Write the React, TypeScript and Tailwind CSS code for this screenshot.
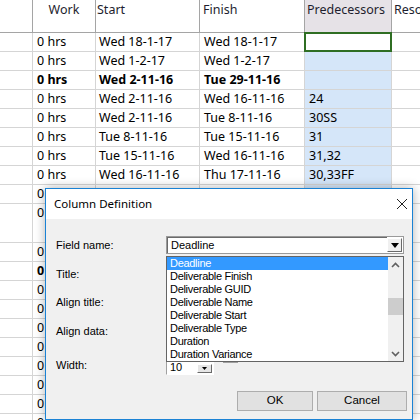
const grid = '"Noto Sans", "Liberation Sans", sans-serif';
const win = '"Liberation Sans", Arial, sans-serif';

type Row = { w: string; s: string; f: string; p: string; bold?: boolean; sel?: boolean; h: string };

const rows: Row[] = [
  { w: '0 hrs', s: 'Wed 18-1-17', f: 'Wed 18-1-17', p: '', sel: true, h: 'h-[19px]' },
  { w: '0 hrs', s: 'Wed 1-2-17', f: 'Wed 1-2-17', p: '', h: 'h-[19px]' },
  { w: '0 hrs', s: 'Wed 2-11-16', f: 'Tue 29-11-16', p: '', bold: true, h: 'h-[19px]' },
  { w: '0 hrs', s: 'Wed 2-11-16', f: 'Wed 16-11-16', p: '24', h: 'h-[19px]' },
  { w: '0 hrs', s: 'Wed 2-11-16', f: 'Tue 8-11-16', p: '30SS', h: 'h-[19px]' },
  { w: '0 hrs', s: 'Tue 8-11-16', f: 'Tue 15-11-16', p: '31', h: 'h-[19px]' },
  { w: '0 hrs', s: 'Tue 15-11-16', f: 'Wed 16-11-16', p: '31,32', h: 'h-[19px]' },
  { w: '0 hrs', s: 'Wed 16-11-16', f: 'Thu 17-11-16', p: '30,33FF', h: 'h-[19px]' },
  { w: '0 hrs', s: 'Thu 17-11-16', f: 'Thu 17-11-16', p: '34', h: 'h-[19px]' },
  { w: '0 hrs', s: 'Thu 17-11-16', f: 'Fri 18-11-16', p: '35', h: 'h-[39px]' },
  { w: '0 hrs', s: 'Fri 18-11-16', f: 'Fri 18-11-16', p: '36', h: 'h-[19px]' },
  { w: '0 hrs', s: 'Mon 21-11-16', f: 'Tue 29-11-16', p: '', bold: true, h: 'h-[19px]' },
  { w: '0 hrs', s: 'Mon 21-11-16', f: 'Tue 22-11-16', p: '37', h: 'h-[19px]' },
  { w: '0 hrs', s: 'Tue 22-11-16', f: 'Wed 23-11-16', p: '39', h: 'h-[19px]' },
  { w: '0 hrs', s: 'Wed 23-11-16', f: 'Thu 24-11-16', p: '40', h: 'h-[19px]' },
  { w: '0 hrs', s: 'Thu 24-11-16', f: 'Fri 25-11-16', p: '41', h: 'h-[19px]' },
  { w: '0 hrs', s: 'Fri 25-11-16', f: 'Mon 28-11-16', p: '42', h: 'h-[19px]' },
  { w: '0 hrs', s: 'Mon 28-11-16', f: 'Tue 29-11-16', p: '43', h: 'h-[19px]' },
  { w: '0 hrs', s: 'Tue 29-11-16', f: 'Tue 29-11-16', p: '44', h: 'h-[19px]' },
  { w: '0 hrs', s: 'Tue 29-11-16', f: 'Tue 29-11-16', p: '45', h: 'h-[19px]' },
];

const fields = [
  'Deadline',
  'Deliverable Finish',
  'Deliverable GUID',
  'Deliverable Name',
  'Deliverable Start',
  'Deliverable Type',
  'Duration',
  'Duration Variance',
];

function Chevron({ up }: { up?: boolean }) {
  return (
    <svg width="9" height="6" viewBox="0 0 9 6" className={up ? '' : 'rotate-180'}>
      <path d="M1 5 L4.5 1.5 L8 5" fill="none" stroke="#606060" strokeWidth="1.6" />
    </svg>
  );
}

function Grid() {
  return (
    <div className="text-[12.5px] text-black" style={{ fontFamily: grid }}>
      <div className="flex h-[33px] border-b border-[#a5a5a5] text-[#1e1e2e]">
        <div className="w-[33px] shrink-0 border-r border-[#a5a5a5]" />
        <div className="w-[63px] shrink-0 border-r border-[#a5a5a5] pt-[1px] text-center">Work</div>
        <div className="w-[104px] shrink-0 border-r border-[#a5a5a5] pt-[1px] pl-[1px]">Start</div>
        <div className="w-[105px] shrink-0 border-r border-[#a5a5a5] pt-[1px] pl-[3px]">Finish</div>
        <div className="w-[87px] shrink-0 border-r border-[#a5a5a5] bg-[#e6e2e7] pt-[1px] pl-[2px]">Predecessors</div>
        <div className="flex-1 pt-[1px] pl-[2px] whitespace-nowrap overflow-hidden">Resource Names</div>
      </div>
      {rows.map((r, i) => (
        <div key={i} className={`flex border-b border-[#d5d5d5] ${r.h} ${r.bold ? 'font-bold' : ''}`}>
          <div className="w-[33px] shrink-0 border-r border-[#d5d5d5]" />
          <div className="w-[63px] shrink-0 border-r border-[#d5d5d5] pl-[4px] leading-[18px] whitespace-nowrap overflow-hidden">{r.w}</div>
          <div className="w-[104px] shrink-0 border-r border-[#d5d5d5] pl-[3px] leading-[18px] whitespace-nowrap overflow-hidden">{r.s}</div>
          <div className="w-[105px] shrink-0 border-r border-[#d5d5d5] pl-[4px] leading-[18px] whitespace-nowrap overflow-hidden">{r.f}</div>
          <div
            className={`relative w-[87px] shrink-0 border-r border-[#d5d5d5] pl-[4px] leading-[18px] whitespace-nowrap ${
              r.sel ? 'bg-white' : 'bg-[#d5e6f9]'
            }`}
          >
            {r.p}
            {r.sel && <span className="absolute -left-px -top-px -right-px -bottom-px border-2 border-[#2f6e23]" />}
          </div>
          <div className="flex-1" />
        </div>
      ))}
    </div>
  );
}

function Dialog() {
  return (
    <div
      className="absolute left-[45px] top-[188px] w-[368px] h-[232px] border border-[#1a82d4] bg-[#f0f0f0] shadow-[0_0_10px_rgba(0,0,0,0.3)]"
      style={{ fontFamily: win }}
    >
      <div className="flex h-[30px] items-center justify-between bg-white pl-[8px] pr-[4px]">
        <span className="text-[11.5px] text-black" style={{ fontFamily: grid }}>
          Column Definition
        </span>
        <svg width="12" height="12" viewBox="0 0 12 12">
          <path d="M1 1 L11 11 M11 1 L1 11" stroke="#222" strokeWidth="1" />
        </svg>
      </div>

      <div className="relative pt-[17px] pl-[10px] text-[11px] text-black">
        <div className="flex h-[18px] items-center">
          <div className="w-[110px]">Field name:</div>
          <div className="flex h-[18px] w-[238px] border border-[#9a9a9a] bg-white">
            <div className="flex flex-1 items-center border-t border-l border-[#6a6a6a] pl-[3px]">Deadline</div>
            <div className="my-px mr-px flex w-[15px] items-center justify-center border border-t-white border-l-white border-r-[#6a6a6a] border-b-[#6a6a6a] bg-[#f0f0f0]">
              <svg width="8" height="5" viewBox="0 0 8 5">
                <path d="M0 0 H8 L4 5 Z" fill="#000" />
              </svg>
            </div>
          </div>
        </div>
        <div className="mt-[11px] flex h-[18px] items-center">Title:</div>
        <div className="mt-[10px] flex h-[18px] items-center">Align title:</div>
        <div className="mt-[11px] flex h-[18px] items-center">Align data:</div>
        <div className="mt-[15px] flex h-[20px] items-center">
          <div className="w-[110px]">Width:</div>
          <div className="relative flex h-[20px] w-[48px] items-end border border-t-[#a0a0a0] border-l-[#a0a0a0] border-r-white border-b-white bg-white">
            <span className="pl-[3px] pb-[1px] leading-[12px]">10</span>
            <div className="absolute right-[1px] bottom-[1px] flex h-[9px] w-[15px] items-center justify-center border border-t-white border-l-white border-r-[#6a6a6a] border-b-[#6a6a6a] bg-[#e6e6e6]">
              <svg width="5" height="3" viewBox="0 0 5 3">
                <path d="M0 0 H5 L2.5 3 Z" fill="#000" />
              </svg>
            </div>
          </div>
        </div>
        <div className="mt-[16px] flex justify-end gap-[4px] pr-[5px]">
          <button type="button" className="h-[20px] w-[76px] border border-[#adadad] bg-[#e1e1e1] text-[11.5px]">
            OK
          </button>
          <button type="button" className="h-[20px] w-[90px] border border-[#adadad] bg-[#e1e1e1] text-[11.5px]">
            Cancel
          </button>
        </div>

        <div className="absolute left-[177px] top-[135px] h-[9px] w-[15px] border border-[#a0a0a0] bg-[#e6e6e6]" />

        <div className="absolute left-[120px] top-[37px] flex h-[106px] w-[238px] border border-[#646464] bg-white text-[11px] tracking-[-0.3px]">
          <div className="flex-1">
            {fields.map((f, i) => (
              <div
                key={f}
                className={`h-[13px] pl-[3px] leading-[13px] whitespace-nowrap ${i === 0 ? 'bg-[#3399ff] text-white' : 'text-black'}`}
              >
                {f}
              </div>
            ))}
          </div>
          <div className="flex w-[15px] flex-col items-center bg-[#f0f0f0]">
            <div className="flex h-[15px] items-center">
              <Chevron up />
            </div>
            <div className="mt-[26px] h-[17px] w-[15px] bg-[#cdcdcd]" />
            <div className="flex-1" />
            <div className="flex h-[15px] items-center">
              <Chevron />
            </div>
          </div>
        </div>
      </div>
    </div>
  );
}

export default function App() {
  return (
    <div className="relative h-[420px] w-[420px] overflow-hidden bg-white">
      <Grid />
      <Dialog />
    </div>
  );
}
